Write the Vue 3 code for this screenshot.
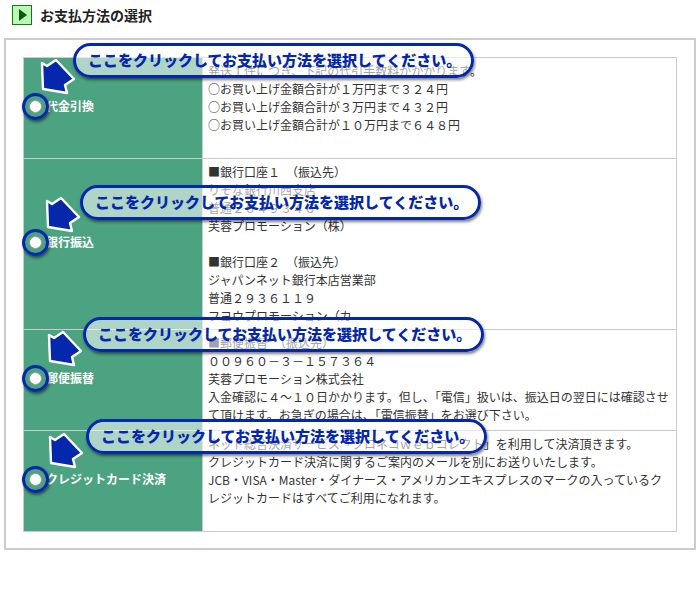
<script setup>
const hint = 'ここをクリックしてお支払い方法を選択してください。'

const methods = [
  {
    id: 'cod',
    label: '代金引換',
    lines: [
      '発送１件につき、下記の代引手数料がかかります。',
      '○お買い上げ金額合計が１万円まで３２４円',
      '○お買い上げ金額合計が３万円まで４３２円',
      '○お買い上げ金額合計が１０万円まで６４８円',
    ],
  },
  {
    id: 'bank',
    label: '銀行振込',
    lines: [
      '■銀行口座１　（振込先）',
      'りそな銀行川西支店',
      '普通２６４９３４６',
      '芙蓉プロモーション（株）',
      '',
      '■銀行口座２　（振込先）',
      'ジャパンネット銀行本店営業部',
      '普通２９３６１１９',
      'フヨウプロモーション（カ',
    ],
  },
  {
    id: 'postal',
    label: '郵便振替',
    lines: [
      '■郵便振替　（振込先）',
      '００９６０－３－１５７３６４',
      '芙蓉プロモーション株式会社',
      '入金確認に４～１０日かかります。但し、「電信」扱いは、振込日の翌日には確認させ',
      'て頂けます。お急ぎの場合は、「電信振替」をお選び下さい。',
    ],
  },
  {
    id: 'card',
    label: 'クレジットカード決済',
    lines: [
      'ネット総合決済サービス「クロネコｗｅｂコレクト」を利用して決済頂きます。',
      'クレジットカード決済に関するご案内のメールを別にお送りいたします。',
      'JCB・VISA・Master・ダイナース・アメリカンエキスプレスのマークの入っているク',
      'レジットカードはすべてご利用になれます。',
    ],
  },
]
</script>

<template>
  <main class="page">
    <header class="heading">
      <svg class="heading-icon" viewBox="0 0 20 20" aria-hidden="true">
        <rect x="0.5" y="0.5" width="19" height="19" fill="#b9fbb4" stroke="#0d7a12" />
        <path d="M7 4 L15 10 L7 16 Z" fill="#065c0a" />
      </svg>
      <h1>お支払方法の選択</h1>
    </header>

    <section class="panel">
      <table class="methods">
        <tbody>
          <tr v-for="m in methods" :key="m.id">
            <th scope="row">
              <div class="choice">
                <span class="dot">
                  <input :id="m.id" type="radio" name="payment" :value="m.id" />
                  <span class="ring"></span>
                </span>
                <label :for="m.id">{{ m.label }}</label>
              </div>
              <svg class="arrow" :class="m.id" viewBox="0 0 36 38" aria-hidden="true">
                <path
                  d="M2 5 L7 8 L16 2 L34 21 L25 27 L27 35 L3 31 Z"
                  fill="#0527ab"
                  stroke="#fff"
                  stroke-width="2.4"
                  stroke-linejoin="round"
                />
              </svg>
              <div class="callout" :class="m.id">{{ hint }}</div>
            </th>
            <td>
              <p v-for="(line, i) in m.lines" :key="i">{{ line }}</p>
            </td>
          </tr>
        </tbody>
      </table>
    </section>
  </main>
</template>

<style>
body {
  margin: 0;
  background: #fff;
}
</style>

<style scoped>
.page {
  padding: 5px 4px;
  font-family: "Noto Sans CJK JP", sans-serif;
  font-size: 12px;
  line-height: 18px;
  color: #333;
}

.heading {
  display: flex;
  align-items: center;
  gap: 8px;
  padding-left: 8px;
  height: 20px;
}

.heading-icon {
  width: 20px;
  height: 20px;
}

h1 {
  margin: 0;
  font-size: 14px;
  font-weight: 700;
  color: #222;
}

.panel {
  margin-top: 13px;
  padding: 17px 17px 16px;
  border: 2px solid #ccc;
}

.methods {
  width: 100%;
  table-layout: fixed;
  border-collapse: collapse;
}

tr {
  height: 101px;
}

th,
td {
  border: 1px solid #ccc;
}

th {
  position: relative;
  width: 178px;
  padding: 0;
  background: #4ca381;
  color: #fff;
  text-align: left;
  vertical-align: middle;
}

td {
  padding: 4px 0 4px 5px;
  vertical-align: top;
  white-space: nowrap;
}

p {
  margin: 0;
  min-height: 18px;
}

.choice {
  display: flex;
  align-items: center;
  gap: 4px;
  padding: 0 0 4px 5px;
}

.dot {
  position: relative;
  display: flex;
}

input {
  appearance: none;
  width: 13px;
  height: 13px;
  margin: 0;
  border: 1px solid #999;
  border-radius: 50%;
  background: #fff;
}

.ring {
  position: absolute;
  inset: -7px;
  z-index: 1;
  border: 3px solid #0527ab;
  border-radius: 50%;
  box-shadow: 1px 2px 3px rgba(0, 0, 0, 0.5);
  pointer-events: none;
}

.arrow {
  position: absolute;
  z-index: 1;
  width: 36px;
  height: 38px;
  pointer-events: none;
}

.callout {
  position: absolute;
  z-index: 2;
  padding: 0 10px 2px 12px;
  border: 3px solid #0527ab;
  border-radius: 18px;
  background: rgba(255, 255, 255, 0.55);
  box-shadow: 1px 2px 3px rgba(0, 0, 0, 0.5);
  color: #0527ab;
  font-size: 15px;
  font-weight: 900;
  line-height: 27px;
  white-space: nowrap;
  pointer-events: none;
}

.callout.cod {
  left: 49px;
  top: -15px;
}

.callout.bank {
  left: 56px;
  top: 26px;
}

.callout.postal {
  left: 59px;
  top: -13px;
}

.callout.card {
  left: 62px;
  top: -12px;
}

.arrow.cod {
  left: 16px;
  top: 0;
}

.arrow.bank {
  left: 21px;
  top: 37px;
}

.arrow.postal {
  left: 23px;
  top: 0;
}

.arrow.card {
  left: 24px;
  top: 1px;
}
</style>
